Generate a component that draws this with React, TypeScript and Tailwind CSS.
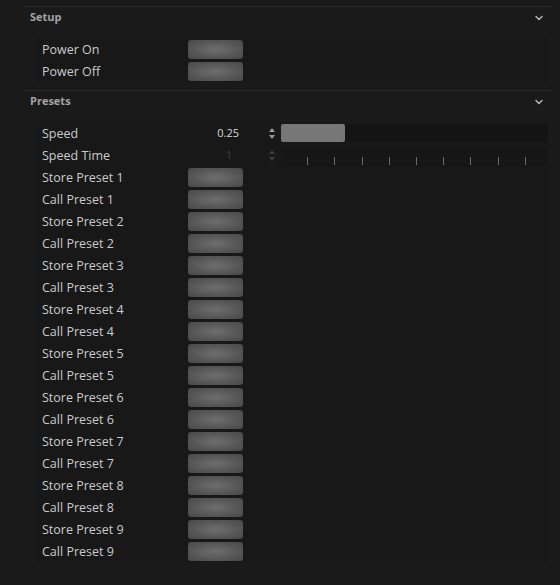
import { ChevronDown } from "lucide-react";

const font = { fontFamily: '"Open Sans", "Liberation Sans", sans-serif' };

function PushButton() {
    return (
        <div className="w-[55px] h-[19px] rounded-[3px] bg-[radial-gradient(ellipse_at_center,#6e6e6e_0%,#585858_55%,#484848_100%)]" />
    );
}

function SectionHeader({ title }: { title: string }) {
    return (
        <div className="flex items-center justify-between h-[21px] pl-[6px] pr-[7px]">
            <span className="text-[11px] font-bold text-[#a3a3a3]">{title}</span>
            <ChevronDown size={12} strokeWidth={3} className="text-[#b5b5b5]" />
        </div>
    );
}

function Row({ label, children }: { label: string; children?: React.ReactNode }) {
    return (
        <div className="flex items-center h-[22px] bg-[#181818] pl-[6px]">
            <span className="w-[146px] pt-[2px] text-[12.5px] text-[#cbcbcb]">{label}</span>
            {children}
        </div>
    );
}

export default function App() {
    const presets: string[] = [];
    for (let i = 1; i <= 9; i++) {
        presets.push(`Store Preset ${i}`);
        presets.push(`Call Preset ${i}`);
    }
    const ticks = [1, 2, 3, 4, 5, 6, 7, 8, 9];

    return (
        <div className="w-[560px] h-[585px] bg-[#1a1a1a] pt-[6px] pl-[24px] pr-[8px]" style={font}>
            <div className="border-t border-[#2a2a2a]">
                <SectionHeader title="Setup" />
                <div className="pl-[12px] pr-[4px] pt-[10px] pb-[8px]">
                    <Row label="Power On">
                        <PushButton />
                    </Row>
                    <Row label="Power Off">
                        <PushButton />
                    </Row>
                </div>
            </div>
            <div className="border-t border-[#2a2a2a]">
                <SectionHeader title="Presets" />
                <div className="pl-[12px] pr-[4px] pt-[10px]">
                    <Row label="Speed">
                        <span className="w-[51px] pt-[1px] text-right text-[11px] text-[#d8d8d8]">0.25</span>
                        <div className="flex flex-col items-center gap-[3px] w-[10px] ml-[28px] mr-[4px]">
                            <div className="w-0 h-0 border-l-[3px] border-r-[3px] border-b-[4px] border-l-transparent border-r-transparent border-b-[#9a9a9a]" />
                            <div className="w-0 h-0 border-l-[3px] border-r-[3px] border-t-[4px] border-l-transparent border-r-transparent border-t-[#9a9a9a]" />
                        </div>
                        <div className="flex-1 h-[18px] bg-[#141414]">
                            <div className="w-[64px] h-full rounded-[2px] bg-[#777777]" />
                        </div>
                    </Row>
                    <Row label="Speed Time">
                        <span className="w-[44px] pt-[1px] text-right text-[10px] text-[#444444]">1</span>
                        <div className="flex flex-col items-center gap-[3px] w-[10px] ml-[35px] mr-[4px]">
                            <div className="w-0 h-0 border-l-[3px] border-r-[3px] border-b-[4px] border-l-transparent border-r-transparent border-b-[#3c3c3c]" />
                            <div className="w-0 h-0 border-l-[3px] border-r-[3px] border-t-[4px] border-l-transparent border-r-transparent border-t-[#3c3c3c]" />
                        </div>
                        <div className="flex-1 h-[18px] bg-[#161616] self-end relative">
                            {ticks.map((t) => (
                                <div
                                    key={t}
                                    className="absolute bottom-[1px] w-px h-[8px] bg-[#6a6a6a]"
                                    style={{ left: `${((t * 27.1 - 1) / 266) * 100}%` }}
                                />
                            ))}
                        </div>
                    </Row>
                    {presets.map((p) => (
                        <Row key={p} label={p}>
                            <PushButton />
                        </Row>
                    ))}
                </div>
            </div>
        </div>
    );
}
